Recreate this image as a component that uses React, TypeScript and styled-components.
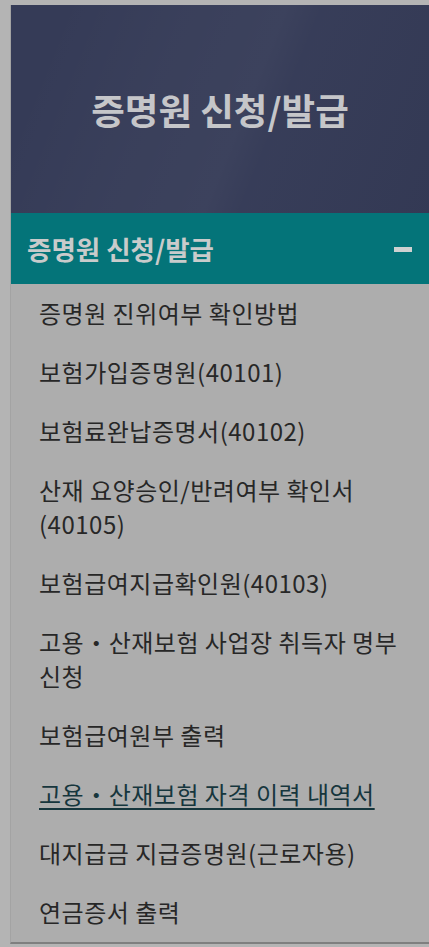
import React from 'react';
import styled, { createGlobalStyle } from 'styled-components';

const GlobalStyle = createGlobalStyle`
  html, body {
    margin: 0;
    padding: 0;
    background: #b4b4b4;
  }
  body {
    font-family: "Noto Sans CJK KR", "Noto Sans", sans-serif;
  }
`

const Page = styled.div`
  padding: 5px 0 0 10px;
  min-height: 947px;
  box-sizing: border-box;
`

const Panel = styled.nav`
  background: #adadad;
  border-left: 1px solid #a3a3a3;
  border-bottom: 2px solid #7f7f7f;
`

const Hero = styled.header`
  height: 208px;
  display: flex;
  align-items: center;
  justify-content: center;
  background:
    linear-gradient(112deg, rgba(255,255,255,0) 10%, rgba(255,255,255,0.025) 35%, rgba(255,255,255,0.035) 55%, rgba(255,255,255,0.01) 62%, rgba(0,0,0,0.03) 100%),
    #353b57;
`

const HeroTitle = styled.h1`
  margin: 0;
  font-size: 36.5px;
  font-weight: 700;
  color: #c5c6c9;
`

const SectionBar = styled.div`
  height: 71px;
  display: flex;
  align-items: center;
  justify-content: space-between;
  padding: 0 17px 0 16px;
  background: #047479;
`

const SectionTitle = styled.h2`
  margin: 0;
  font-size: 26.5px;
  font-weight: 700;
  color: #c9cbcb;
`

const Minus = styled.span`
  display: block;
  width: 18px;
  height: 5px;
  margin-top: 1px;
  background: #cfd1d1;
`

const List = styled.ul`
  list-style: none;
  margin: 0;
  padding: 0 22px 0 28px;
`

const Item = styled.li`
  padding: 11.5px 0 13.5px;
  font-size: 24px;
  line-height: 34px;
  letter-spacing: 0.5px;
`

const Link = styled.a<{ $active?: boolean }>`
  color: ${p => (p.$active ? '#16363d' : '#272727')};
  text-decoration: ${p => (p.$active ? 'underline' : 'none')};
  text-decoration-thickness: 2px;
  text-underline-offset: 4px;
`

const items = [
  '증명원 진위여부 확인방법',
  '보험가입증명원(40101)',
  '보험료완납증명서(40102)',
  '산재 요양승인/반려여부 확인서(40105)',
  '보험급여지급확인원(40103)',
  '고용・산재보험 사업장 취득자 명부 신청',
  '보험급여원부 출력',
  '고용・산재보험 자격 이력 내역서',
  '대지급금 지급증명원(근로자용)',
  '연금증서 출력',
];

const App = () => (
  <>
    <GlobalStyle />
    <Page>
      <Panel>
        <Hero>
          <HeroTitle>증명원 신청/발급</HeroTitle>
        </Hero>
        <SectionBar>
          <SectionTitle>증명원 신청/발급</SectionTitle>
          <Minus />
        </SectionBar>
        <List>
          {items.map((text, i) => (
            <Item key={text}>
              <Link href="#" $active={i === 7}>{text}</Link>
            </Item>
          ))}
        </List>
      </Panel>
    </Page>
  </>
);

export default App;
